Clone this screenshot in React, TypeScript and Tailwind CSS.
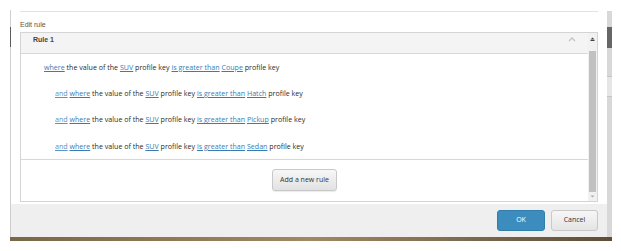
const Link = ({ children, light }: { children: React.ReactNode; light?: boolean }) => (
  <span className={`underline underline-offset-[1px] ${light ? "text-[#5b93c4]" : "text-[#3b7bb3]"}`}>{children}</span>
);

const rules = [
  { target: "Coupe", first: true },
  { target: "Hatch" },
  { target: "Pickup" },
  { target: "Sedan" },
];

export default function App() {
  return (
    <div className="w-[621px] h-[251px] bg-white overflow-hidden pl-[10px] font-['Open_Sans',sans-serif] text-[#333]">
      <div className="flex w-[602px]">
        <div className="w-[597px] flex flex-col">
          {/* dialog body */}
          <div className="h-[204px] flex pt-[10px]">
            <div className="w-px h-[194px] bg-[#cfcfcf] flex flex-col">
              <div className="h-[17px]" />
              <div className="h-[20px] bg-[#5c5c5c]" />
            </div>
            <div className="flex-1 pl-[9px]">
              <div className="mt-[1px] w-[578px] border-t border-[#e2e2e2]" />
              <div className="mt-[8px] h-[10px] leading-[10px] text-[7px] text-[#555] font-['Liberation_Sans',sans-serif]">Edit rule</div>
              <div className="mt-[2px] w-[578px] h-[170px] border border-[#d4d4d4] flex">
                <div className="flex-1 flex flex-col">
                  <div className="h-[21px] bg-[#f4f4f4] border-b border-[#d8d8d8] flex items-start justify-between pl-[12px] pr-[12px] pt-[2px]">
                    <span className="text-[7px] leading-[9px] font-bold text-[#444] font-['Liberation_Sans',sans-serif]">Rule 1</span>
                    <svg width="8" height="5" viewBox="0 0 8 5" className="mt-[2px]">
                      <path d="M1 4 L4 1 L7 4" fill="none" stroke="#c4c4c4" strokeWidth="1.3" />
                    </svg>
                  </div>
                  <div className="h-[106px] border-b border-[#d8d8d8] flex flex-col">
                    {rules.map((r) => (
                      <div
                        key={r.target}
                        className={`h-[26.5px] flex items-center text-[7.1px] text-[#2a2a2a] ${r.first ? "pl-[23px]" : "pl-[34px]"}`}
                      >
                        <span>
                          {!r.first && (
                            <>
                              <Link light>and</Link>{" "}
                            </>
                          )}
                          <Link>where</Link> the value of the <Link>SUV</Link> profile key{" "}
                          <Link>is greater than</Link> <Link>{r.target}</Link> profile key
                        </span>
                      </div>
                    ))}
                  </div>
                  <div className="flex-1 flex justify-center pt-[9px]">
                    <button className="w-[65px] h-[22px] rounded-[3px] border border-[#c8c8c8] bg-gradient-to-b from-[#f7f7f7] to-[#e2e2e2] text-[7px] text-[#333] shadow-[0_1px_1px_rgba(0,0,0,0.08)]">
                      Add a new rule
                    </button>
                  </div>
                </div>
                <div className="w-[9px] bg-[#f1f1f1] flex flex-col items-center">
                  <div className="h-[18px] pt-[4px]">
                    <svg width="5" height="4" viewBox="0 0 5 4">
                      <path d="M0.5 2.5 L2.5 0.5 L4.5 2.5 Z" fill="#444" />
                      <rect x="0.5" y="3" width="4" height="1" fill="#444" />
                    </svg>
                  </div>
                  <div className="w-[7px] h-[141px] bg-[#c1c1c1]" />
                  <div className="pt-[3px]">
                    <svg width="5" height="3" viewBox="0 0 5 3">
                      <path d="M0.5 0.5 L4.5 0.5 L2.5 2.5 Z" fill="#aaa" />
                    </svg>
                  </div>
                </div>
              </div>
            </div>
          </div>
          {/* footer */}
          <div className="h-[33px] bg-[#efefef] border-l border-[#cfcfcf] flex justify-end gap-[6px] pt-[6px] pr-[9px]">
            <button className="w-[48px] h-[21px] rounded-[3px] bg-[#3c8dbd] border border-[#317eab] text-white text-[7px]">OK</button>
            <button className="w-[47px] h-[21px] rounded-[3px] border border-[#c8c8c8] bg-gradient-to-b from-[#f7f7f7] to-[#e4e4e4] text-[#333] text-[7px]">Cancel</button>
          </div>
        </div>
        {/* page scrollbar strip */}
        <div className="w-[5px] mt-[11px] h-[226px] bg-[#d8d8d8] flex flex-col">
          <div className="h-[16px]" />
          <div className="h-[21px] bg-[#666]" />
          <div className="h-[28px]" />
          <div className="h-[21px] bg-[#e6e6e6] border-y border-[#c4c4c4]" />
        </div>
      </div>
      <div className="w-[602px] h-[4px] bg-gradient-to-r from-[#7a6748] via-[#a08866] to-[#5e4e38]" />
    </div>
  );
}
